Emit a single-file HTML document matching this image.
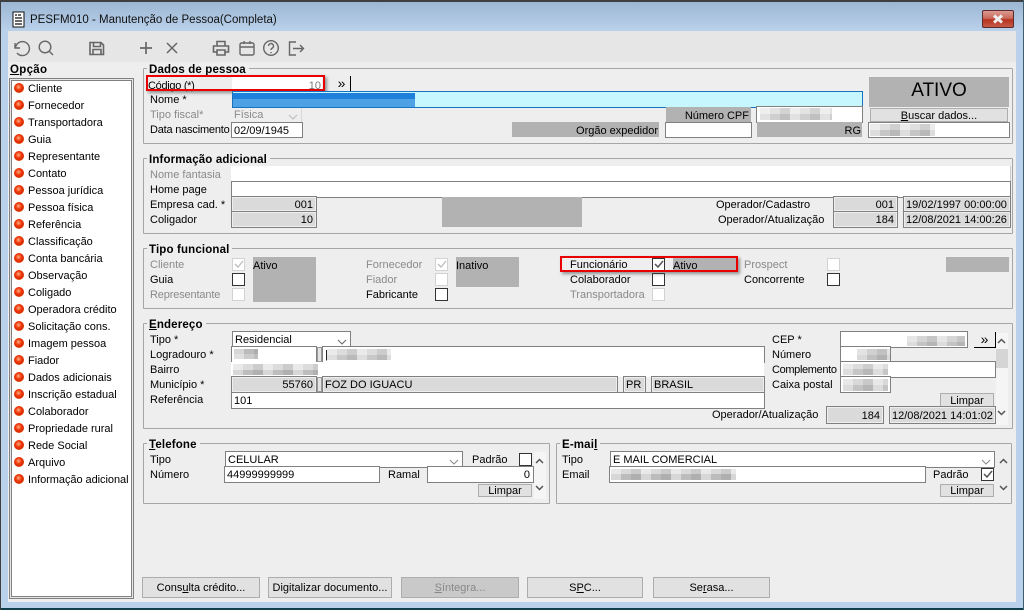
<!DOCTYPE html>
<html lang="pt"><head><meta charset="utf-8"><title>PESFM010</title>
<style>
html,body{margin:0;padding:0}
body{width:1024px;height:610px;overflow:hidden;position:relative;background:#b9d1ea;font:11px/14px "Liberation Sans",sans-serif;color:#000}
div,span.a{position:absolute;box-sizing:border-box;white-space:nowrap}
.l{height:14px;margin-top:1px}
.d{color:#8a8a8a}
.b{font-weight:bold;font-size:11.5px;background:#eee;padding:0 3px 0 2px;letter-spacing:.15px;height:14px;color:#000;margin-top:1px}
.grp{border:1px solid #a6a6a6;border-radius:1px}
.f{background:#fff;border:1px solid #808080;padding:2px 0 0 2px;line-height:13px;overflow:hidden}
.n{border:0;background:#fff}
.g{background:#dadada;border:1px solid #808080;box-shadow:inset 0 0 0 1px #eee;padding:2px 3px 0 3px;line-height:13px;overflow:hidden}
.r{text-align:right}
.s{background:#b2b2b2}
.btn{background:#e1e1e1;border:1px solid #adadad;text-align:center;line-height:12px;padding-top:1px}
.bb{height:21px;top:577px;width:118px;line-height:18px}
.cb{width:13px;height:13px;background:#fff;border:1px solid #333}
.cd{width:13px;height:13px;background:#fff;border:1px solid #d2d2d2}
.red{border:2px solid #ea0000;box-shadow:2px 2px 3px rgba(70,70,70,.55)}
.ball{left:14px;width:10px;height:10px;border-radius:50%;background:radial-gradient(circle at 45% 40%,#ffb080 0,#f03c10 35%,#d92800 62%,#f2b33a 90%)}
.p{background:#c9c9c9;height:6px;background-image:repeating-linear-gradient(90deg,rgba(255,255,255,.4) 0 10px,transparent 10px 20px,rgba(0,0,0,.07) 20px 30px)}
u{text-decoration:underline}
</style></head><body>
<div style="left:0;top:0;width:1024px;height:2px;background:#3f3f3f"></div>
<div style="left:0;top:2px;width:1024px;height:29px;background:linear-gradient(#9cb6d3,#b9d1ea)"></div>
<div style="left:0;top:608px;width:1024px;height:2px;background:#0f3f4a"></div>
<div style="left:0;top:0;width:1px;height:610px;background:#3f3f3f"></div>
<div style="left:1023px;top:0;width:1px;height:610px;background:#3f5f6f"></div>
<div style="left:8px;top:31px;width:1008px;height:31px;background:#e6e6e6"></div>
<div style="left:8px;top:62px;width:1008px;height:540px;background:#eee"></div>

<svg style="position:absolute;left:0;top:0" width="1024" height="70" fill="none">
<rect x="13" y="12" width="11" height="15" fill="#fff" stroke="#111"/>
<path d="M15 15h2M15 18h7M15 21h7M15 24h7M18 15h3" stroke="#111" stroke-width="1.3"/>
<g stroke="#666" stroke-width="1.4">
<path d="M15 43v5h5M15.5 47.500A7 7 0 1 1 17 53"/>
<circle cx="45" cy="47" r="5.800"/><path d="M49.500 51.500L53 55"/>
<path d="M90 42.500h11l2.500 2.500v9.500h-13.500zM93.500 42.500v4h7v-4M93 54.500v-5h8v5" stroke-width="1.600"/>
<path d="M146 42v12M140 48h12" stroke-width="1.700"/>
<path d="M167 43l10 10M177 43l-10 10" stroke-width="1.500"/>
<path d="M217 46v-4.500h8V46M217 52h-3.500v-6h15v6H225M217 50h8v5h-8z" stroke-width="1.600"/>
<rect x="240" y="43" width="14" height="12" rx="1.500"/><path d="M240 47h14M244 41v3M250 41v3"/>
<circle cx="271" cy="48" r="7.300"/><path d="M268.500 46a2.500 2.500 0 1 1 3.500 2.300c-.8.4-1 .9-1 1.700M271 52v1.200"/>
<path d="M296 42h-6.500v13h6.500M293 48.500h10M300 45l3.500 3.500-3.500 3.500"/>
</g></svg>
<div class="l" style="left:30px;top:12px;font-size:11.500px;line-height:15px;color:#111">PESFM010 - Manutenção de Pessoa(Completa)</div>
<div style="left:982px;top:10px;width:32px;height:18px;border:1px solid #5d2a2e;border-radius:2px;background:linear-gradient(#dc9a90 0,#c96a5d 45%,#b8341f 55%,#c65a48 100%)"></div>
<svg style="position:absolute;left:982px;top:10px" width="32" height="18"><path d="M12 5.500l8 7M20 5.500l-8 7" stroke="#eee" stroke-width="3"/></svg>

<div class="l" style="left:10px;top:62px;font-weight:bold;font-size:11.500px;letter-spacing:.3px"><u>O</u>pção</div>
<div style="left:9px;top:78px;width:125px;height:521px;background:#fff;border:1px solid #808080;box-shadow:inset 0 0 0 1px #e8e8e8,inset 0 0 0 2px #808080"></div>
<div class="ball" style="top:83px"></div><div class="l" style="left:28px;top:81px">Cliente</div>
<div class="ball" style="top:100px"></div><div class="l" style="left:28px;top:98px">Fornecedor</div>
<div class="ball" style="top:117px"></div><div class="l" style="left:28px;top:115px">Transportadora</div>
<div class="ball" style="top:134px"></div><div class="l" style="left:28px;top:132px">Guia</div>
<div class="ball" style="top:151px"></div><div class="l" style="left:28px;top:149px">Representante</div>
<div class="ball" style="top:168px"></div><div class="l" style="left:28px;top:166px">Contato</div>
<div class="ball" style="top:185px"></div><div class="l" style="left:28px;top:183px">Pessoa jurídica</div>
<div class="ball" style="top:202px"></div><div class="l" style="left:28px;top:200px">Pessoa física</div>
<div class="ball" style="top:219px"></div><div class="l" style="left:28px;top:217px">Referência</div>
<div class="ball" style="top:236px"></div><div class="l" style="left:28px;top:234px">Classificação</div>
<div class="ball" style="top:253px"></div><div class="l" style="left:28px;top:251px">Conta bancária</div>
<div class="ball" style="top:270px"></div><div class="l" style="left:28px;top:268px">Observação</div>
<div class="ball" style="top:287px"></div><div class="l" style="left:28px;top:285px">Coligado</div>
<div class="ball" style="top:304px"></div><div class="l" style="left:28px;top:302px">Operadora crédito</div>
<div class="ball" style="top:321px"></div><div class="l" style="left:28px;top:319px">Solicitação cons.</div>
<div class="ball" style="top:338px"></div><div class="l" style="left:28px;top:336px">Imagem pessoa</div>
<div class="ball" style="top:355px"></div><div class="l" style="left:28px;top:353px">Fiador</div>
<div class="ball" style="top:372px"></div><div class="l" style="left:28px;top:370px">Dados adicionais</div>
<div class="ball" style="top:389px"></div><div class="l" style="left:28px;top:387px">Inscrição estadual</div>
<div class="ball" style="top:406px"></div><div class="l" style="left:28px;top:404px">Colaborador</div>
<div class="ball" style="top:423px"></div><div class="l" style="left:28px;top:421px">Propriedade rural</div>
<div class="ball" style="top:440px"></div><div class="l" style="left:28px;top:438px">Rede Social</div>
<div class="ball" style="top:457px"></div><div class="l" style="left:28px;top:455px">Arquivo</div>
<div class="ball" style="top:474px"></div><div class="l" style="left:28px;top:472px;letter-spacing:-.05px">Informação adicional</div>

<!-- Dados de pessoa -->
<div class="grp" style="left:143px;top:68px;width:870px;height:76px"></div>
<div class="b" style="left:147px;top:62px">Dados de pessoa</div>
<div class="n" style="left:232px;top:76px;width:90px;height:15px;background:#fff"></div>
<div class="l" style="left:148px;top:78px;letter-spacing:-.3px">Código (*)</div>
<div class="l r" style="left:290px;top:78px;width:31px;color:#777">10</div>
<div class="red" style="left:146px;top:75px;width:179px;height:16px"></div>
<div style="left:333px;top:76px;width:18px;height:16px;background:#eee;border-right:1px solid #000;border-bottom:1px solid #000;text-align:center;font-size:14px;line-height:14px">»</div>
<div class="l" style="left:150px;top:92px">Nome *</div>
<div style="left:232px;top:91px;width:631px;height:17px;background:#c6f7ff;border:1px solid #1673c2;border-left-color:#1673c2"></div>
<div style="left:233px;top:93px;width:182px;height:6px;background:#1f80dc"></div>
<div style="left:233px;top:99px;width:182px;height:8px;background:#4fa1e6"></div>
<div class="l d" style="left:150px;top:107px">Tipo fiscal*</div>
<div style="left:232px;top:108px;width:70px;height:15px;border-right:1px solid #d9d9d9;padding:1px 0 0 2px;color:#8a8a8a;line-height:13px">Física</div>
<svg style="position:absolute;left:288px;top:114px" width="11" height="7"><path d="M1 1l4 4 4-4" fill="none" stroke="#bbb"/></svg>
<div class="l" style="left:150px;top:122px;letter-spacing:-.2px">Data nascimento</div>
<div class="f" style="left:231px;top:122px;width:72px;height:16px">02/09/1945</div>
<div class="s" style="left:666px;top:107px;width:85px;height:15px"></div>
<div class="l r" style="left:680px;top:108px;width:69px">Número CPF</div>
<div class="f" style="left:756px;top:106px;width:107px;height:17px"></div>
<div class="p" style="left:760px;top:108px;width:72px;background-color:#e3e3e3"></div>
<div class="p" style="left:760px;top:114px;width:72px;background-color:#cfcfcf"></div>
<div class="s" style="left:512px;top:122px;width:147px;height:15px"></div>
<div class="l r" style="left:560px;top:123px;width:98px">Orgão expedidor</div>
<div class="f" style="left:665px;top:122px;width:87px;height:16px"></div>
<div class="s" style="left:757px;top:122px;width:105px;height:15px"></div>
<div class="l r" style="left:820px;top:123px;width:41px">RG</div>
<div class="f" style="left:868px;top:122px;width:142px;height:16px"></div>
<div class="p" style="left:870px;top:124px;width:65px;background-color:#dfdfdf"></div>
<div class="p" style="left:870px;top:130px;width:65px;background-color:#c6c6c6"></div>
<div class="s" style="left:869px;top:77px;width:140px;height:30px;text-align:center;font-size:19px;line-height:27px">ATIVO</div>
<div class="btn" style="left:870px;top:108px;width:138px;height:14px"><u>B</u>uscar dados...</div>

<!-- Informação adicional -->
<div class="grp" style="left:143px;top:158px;width:870px;height:76px"></div>
<div class="b" style="left:147px;top:152px">Informação adicional</div>
<div class="l d" style="left:150px;top:167px">Nome fantasia</div>
<div style="left:231px;top:166px;width:780px;height:15px;background:#fff;border-right:1px solid #ccc"></div>
<div class="l" style="left:150px;top:182px">Home page</div>
<div class="f" style="left:231px;top:181px;width:780px;height:17px"></div>
<div class="l" style="left:150px;top:197px">Empresa cad. *</div>
<div class="g r" style="left:231px;top:196px;width:86px;height:16px">001</div>
<div class="l" style="left:150px;top:212px">Coligador</div>
<div class="g r" style="left:231px;top:211px;width:86px;height:17px">10</div>
<div class="s" style="left:442px;top:197px;width:140px;height:30px"></div>
<div class="l" style="left:716px;top:197px">Operador/Cadastro</div>
<div class="l" style="left:718px;top:212px">Operador/Atualização</div>
<div class="g r" style="left:833px;top:196px;width:65px;height:16px">001</div>
<div class="g r" style="left:833px;top:211px;width:65px;height:17px">184</div>
<div class="g" style="left:903px;top:196px;width:108px;height:16px;padding-left:2px">19/02/1997 00:00:00</div>
<div class="g" style="left:903px;top:211px;width:108px;height:17px;padding-left:2px">12/08/2021 14:00:26</div>

<!-- Tipo funcional -->
<div class="grp" style="left:143px;top:248px;width:870px;height:61px"></div>
<div class="b" style="left:147px;top:242px">Tipo funcional</div>
<div class="s" style="left:253px;top:257px;width:63px;height:45px"></div>
<div class="s" style="left:456px;top:257px;width:63px;height:30px"></div>
<div class="s" style="left:946px;top:257px;width:63px;height:15px"></div>
<div class="s" style="left:673px;top:257px;width:64px;height:15px"></div>
<div class="l d" style="left:150px;top:257px">Cliente</div>
<div class="l" style="left:150px;top:272px">Guia</div>
<div class="l d" style="left:150px;top:287px;letter-spacing:-.15px">Representante</div>
<div class="l" style="left:253px;top:258px">Ativo</div>
<div class="l" style="left:456px;top:258px">Inativo</div>
<div class="l" style="left:673px;top:258px">Ativo</div>
<div class="cd" style="left:232px;top:258px"></div><div class="cb" style="left:232px;top:273px"></div><div class="cd" style="left:232px;top:288px"></div>
<div class="l d" style="left:366px;top:257px">Fornecedor</div>
<div class="l d" style="left:366px;top:272px">Fiador</div>
<div class="l" style="left:366px;top:287px">Fabricante</div>
<div class="cd" style="left:435px;top:258px"></div><div class="cd" style="left:435px;top:273px"></div><div class="cb" style="left:435px;top:288px"></div>
<div class="l" style="left:570px;top:257px">Funcionário</div>
<div class="l" style="left:570px;top:272px">Colaborador</div>
<div class="l d" style="left:570px;top:287px">Transportadora</div>
<div class="cb" style="left:652px;top:258px"></div><div class="cb" style="left:652px;top:273px"></div><div class="cd" style="left:652px;top:288px"></div>
<div class="red" style="left:560px;top:256px;width:178px;height:16px"></div>
<div class="l d" style="left:744px;top:257px">Prospect</div>
<div class="l" style="left:744px;top:272px">Concorrente</div>
<div class="cd" style="left:827px;top:258px"></div><div class="cb" style="left:827px;top:273px"></div>
<svg style="position:absolute;left:232px;top:258px" width="220" height="14" fill="none"><path d="M3 6l3 3 5-6" stroke="#bdbdbd" stroke-width="1.300"/><path d="M206 6l3 3 5-6" stroke="#bdbdbd" stroke-width="1.300"/></svg>
<svg style="position:absolute;left:652px;top:258px" width="14" height="14" fill="none"><path d="M3 6l3 3 5-6" stroke="#555" stroke-width="1.500"/></svg>

<!-- Endereço -->
<div class="grp" style="left:143px;top:323px;width:870px;height:106px"></div>
<div class="b" style="left:147px;top:317px"><u>E</u>ndereço</div>
<div class="l" style="left:150px;top:332px">Tipo *</div>
<div class="f" style="left:232px;top:331px;width:119px;height:17px">Residencial</div>
<svg style="position:absolute;left:337px;top:339px" width="11" height="7"><path d="M1 1l4 4 4-4" fill="none" stroke="#666"/></svg>
<div class="l" style="left:150px;top:347px">Logradouro *</div>
<div class="f" style="left:231px;top:346px;width:86px;height:17px"></div>
<div class="p" style="left:234px;top:349px;width:24px;height:5px;background-color:#bbb"></div>
<div class="p" style="left:234px;top:354px;width:24px;height:5px;background-color:#ccc"></div>
<div class="f" style="left:322px;top:346px;width:443px;height:17px">|</div>
<div style="left:317px;top:347px;width:5px;height:15px;background:#e3e3e3;border:1px solid #999"></div>
<div class="p" style="left:327px;top:349px;width:64px;background-color:#dcdcdc"></div>
<div class="p" style="left:327px;top:355px;width:64px;height:5px;background-color:#c8c8c8"></div>
<div class="l" style="left:150px;top:362px">Bairro</div>
<div style="left:231px;top:362px;width:533px;height:15px;background:#fff"></div>
<div class="p" style="left:233px;top:364px;width:85px;background-color:#dcdcdc"></div>
<div class="p" style="left:233px;top:370px;width:85px;height:5px;background-color:#bdbdbd"></div>
<div class="l" style="left:150px;top:377px">Município *</div>
<div class="g r" style="left:231px;top:376px;width:86px;height:17px">55760</div>
<div style="left:317px;top:377px;width:5px;height:15px;background:#e3e3e3;border:1px solid #999"></div>
<div class="g" style="left:322px;top:376px;width:296px;height:17px;padding-left:2px">FOZ DO IGUACU</div>
<div class="g" style="left:623px;top:376px;width:23px;height:17px;padding-left:2px">PR</div>
<div class="g" style="left:651px;top:376px;width:114px;height:17px;padding-left:2px">BRASIL</div>
<div class="l" style="left:150px;top:392px">Referência</div>
<div class="f" style="left:231px;top:392px;width:534px;height:17px">101</div>
<div class="l" style="left:772px;top:332px">CEP *</div>
<div class="f" style="left:840px;top:331px;width:128px;height:17px"></div>
<div class="p" style="left:907px;top:336px;width:58px;background-color:#d5d5d5"></div>
<div class="p" style="left:907px;top:342px;width:58px;height:4px;background-color:#c4c4c4"></div>
<div style="left:974px;top:332px;width:22px;height:16px;background:#eee;border-right:1px solid #000;border-bottom:1px solid #000;text-align:center;font-size:14px;line-height:14px">»</div>
<div class="l" style="left:772px;top:347px">Número</div>
<div class="f" style="left:840px;top:346px;width:51px;height:17px"></div>
<div class="p" style="left:857px;top:349px;width:33px;background-color:#d0d0d0"></div>
<div class="p" style="left:857px;top:355px;width:33px;height:5px;background-color:#c0c0c0"></div>
<div class="l" style="left:772px;top:362px;letter-spacing:-.35px">Complemento</div>
<div class="f" style="left:840px;top:361px;width:156px;height:17px"></div>
<div class="p" style="left:843px;top:364px;width:45px;height:5px;background-color:#ddd"></div>
<div class="p" style="left:843px;top:369px;width:45px;height:6px;background-color:#c6c6c6"></div>
<div class="l" style="left:772px;top:377px">Caixa postal</div>
<div class="f" style="left:840px;top:376px;width:51px;height:17px"></div>
<div class="p" style="left:843px;top:379px;width:45px;background-color:#d8d8d8"></div>
<div class="p" style="left:843px;top:385px;width:45px;height:6px;background-color:#c4c4c4"></div>
<div class="btn" style="left:940px;top:393px;width:54px;height:14px">Limpar</div>
<div class="l" style="left:712px;top:407px">Operador/Atualização</div>
<div class="g r" style="left:826px;top:406px;width:58px;height:18px;line-height:14px">184</div>
<div class="g" style="left:889px;top:406px;width:107px;height:18px;padding-left:2px;line-height:14px">12/08/2021 14:01:02</div>
<div style="left:996px;top:333px;width:12px;height:92px;background:#f5f5f5"></div>
<div style="left:996px;top:349px;width:12px;height:19px;background:#d5d5d5"></div>

<!-- Telefone -->
<div class="grp" style="left:143px;top:443px;width:407px;height:61px"></div>
<div class="b" style="left:147px;top:437px"><u>T</u>elefone</div>
<div class="l" style="left:150px;top:452px">Tipo</div>
<div class="f" style="left:225px;top:451px;width:238px;height:17px">CELULAR</div>
<svg style="position:absolute;left:449px;top:459px" width="11" height="7"><path d="M1 1l4 4 4-4" fill="none" stroke="#888"/></svg>
<div class="l" style="left:472px;top:452px">Padrão</div>
<div class="cb" style="left:519px;top:453px"></div>
<div class="l" style="left:150px;top:467px">Número</div>
<div class="f" style="left:224px;top:466px;width:156px;height:17px">44999999999</div>
<div class="l" style="left:388px;top:467px">Ramal</div>
<div class="f r" style="left:427px;top:466px;width:107px;height:17px;padding-right:3px">0</div>
<div class="btn" style="left:478px;top:484px;width:54px;height:13px;line-height:11px">Limpar</div>
<div style="left:534px;top:452px;width:12px;height:47px;background:#f5f5f5"></div>

<!-- E-mail -->
<div class="grp" style="left:556px;top:443px;width:456px;height:61px"></div>
<div class="b" style="left:560px;top:437px">E-mai<u>l</u></div>
<div class="l" style="left:562px;top:452px">Tipo</div>
<div class="f" style="left:610px;top:451px;width:385px;height:17px">E MAIL COMERCIAL</div>
<svg style="position:absolute;left:981px;top:459px" width="11" height="7"><path d="M1 1l4 4 4-4" fill="none" stroke="#888"/></svg>
<div class="l" style="left:562px;top:467px">Email</div>
<div class="f" style="left:609px;top:466px;width:317px;height:17px"></div>
<div class="p" style="left:611px;top:469px;width:125px;height:5px;background-color:#dadada"></div>
<div class="p" style="left:611px;top:474px;width:125px;height:6px;background-color:#bcbcbc"></div>
<div class="l" style="left:933px;top:467px">Padrão</div>
<div class="cb" style="left:981px;top:468px"></div>
<svg style="position:absolute;left:981px;top:468px" width="14" height="14" fill="none"><path d="M3 6l3 3 5-6" stroke="#555" stroke-width="1.500"/></svg>
<div class="btn" style="left:940px;top:484px;width:54px;height:13px;line-height:11px">Limpar</div>

<svg style="position:absolute;left:530px;top:335px" width="490" height="160" fill="none" stroke="#555" stroke-width="1.500">
<path d="M468 8l3.500-3.500 3.500 3.500M468 76l3.500 3.500 3.500-3.500"/>
<path d="M6 128l3.500-3.500 3.500 3.500M6 151l3.500 3.500 3.500-3.500"/>
<path d="M470 128l3.500-3.500 3.500 3.500M470 151l3.500 3.500 3.500-3.500"/>
</svg>

<!-- Bottom buttons -->
<div class="btn bb" style="left:142px">Cons<u>u</u>lta crédito...</div>
<div class="btn bb" style="left:268px;width:124px">Di<u>g</u>italizar documento...</div>
<div class="btn bb" style="left:401px;background:#c9c9c9;color:#888"><u>S</u>íntegra...</div>
<div class="btn bb" style="left:527px;width:116px">S<u>P</u>C...</div>
<div class="btn bb" style="left:653px;width:117px">Se<u>r</u>asa...</div>
</body></html>
